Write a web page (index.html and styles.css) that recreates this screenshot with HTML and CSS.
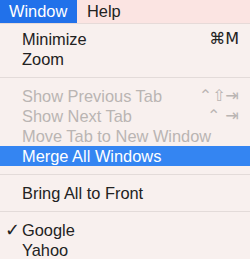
FILE: index.html
```html
<!DOCTYPE html>
<html lang="en">
<head>
    <meta charset="UTF-8">
    <title>Window menu</title>
    <link rel="stylesheet" href="styles.css">
</head>
<body>
    <div class="menubar">
        <div class="title open">Window</div>
        <div class="title">Help</div>
    </div>

    <div class="menu">
        <div class="item">Minimize<span class="key">⌘M</span></div>
        <div class="item">Zoom</div>
        <div class="sep"></div>
        <div class="item off">Show Previous Tab<span class="key">⌃⇧⇥</span></div>
        <div class="item off">Show Next Tab<span class="key">⌃ ⇥</span></div>
        <div class="item off">Move Tab to New Window</div>
        <div class="item active">Merge All Windows</div>
        <div class="sep"></div>
        <div class="item">Bring All to Front</div>
        <div class="sep"></div>
        <div class="item"><span class="check">✓</span>Google</div>
        <div class="item">Yahoo</div>
    </div>
</body>
</html>
```

FILE: styles.css
```css
*{
    margin: 0;
    padding: 0;
    box-sizing: border-box;
}
body{
    width: 250px;
    height: 259px;
    overflow: hidden;
    font-family: "Liberation Sans", Arial, sans-serif;
    font-size: 16.4px;
    color: #222;
    background-color: #f8f0ee;
}
.menubar{
    display: flex;
    height: 24px;
    background-color: #fbe4e2;
    border-bottom: 1px solid #e6dad8;
}
.title{
    height: 23px;
    line-height: 23px;
    padding: 0 10px 0 10px;
}
.title.open{
    width: 77px;
    padding-left: 9px;
    background-color: #2171ea;
    color: #fff;
}
.menu{
    padding-top: 5px;
}
.item{
    position: relative;
    display: flex;
    justify-content: space-between;
    height: 20px;
    line-height: 20px;
    padding: 0 11px 0 22px;
}
.item.off{
    color: #bab5b3;
}
.item.active{
    background-color: #3485f2;
    color: #fff;
}
.key{
    font-family: "DejaVu Sans", sans-serif;
    font-size: 16px;
}
.check{
    position: absolute;
    left: 5px;
    top: 0;
    font-family: "DejaVu Sans", sans-serif;
    font-size: 18px;
}
.sep{
    height: 1px;
    margin: 8px 0 8px 0;
    background-color: #e3dbd9;
}
```
